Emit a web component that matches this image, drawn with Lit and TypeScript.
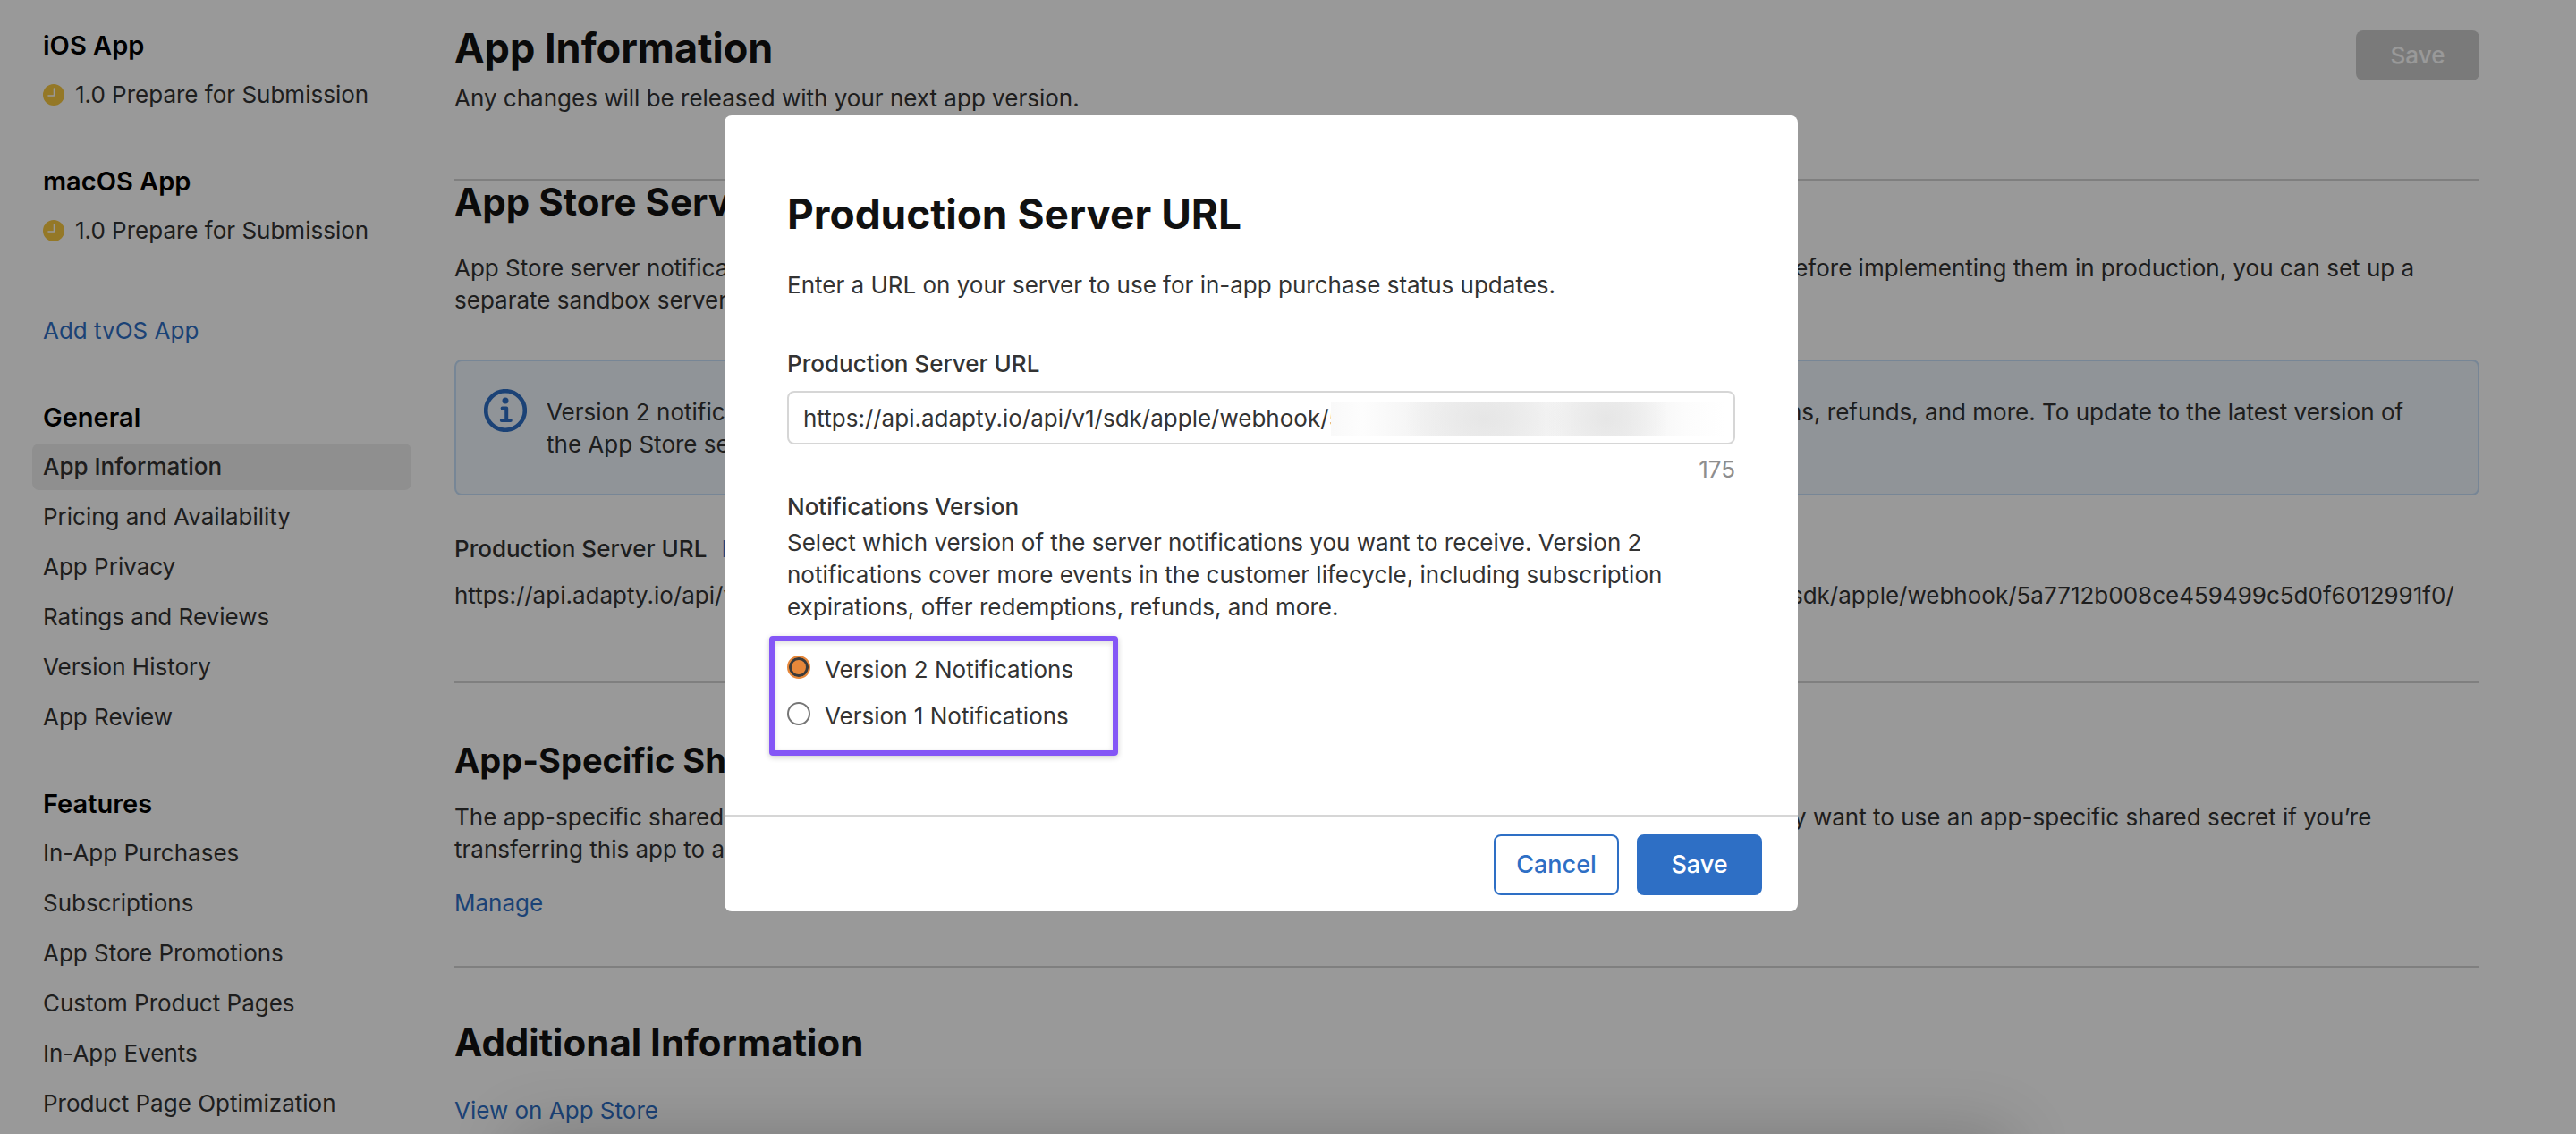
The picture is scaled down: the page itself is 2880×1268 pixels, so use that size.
import { LitElement, html, css, svg, nothing } from "lit";
import { customElement, property, state } from "lit/decorators.js";

const clockIcon = svg`<svg class="clock" viewBox="0 0 24 24" aria-hidden="true">
  <circle cx="12" cy="12" r="12" fill="#f7c841" />
  <path d="M12.5 5v8H6" fill="none" stroke="#fff" stroke-width="1.6" stroke-linecap="round" stroke-linejoin="round" />
</svg>`;

const infoIcon = svg`<svg class="info-icon" viewBox="0 0 48 48" aria-hidden="true">
  <circle cx="24" cy="24" r="21.8" fill="none" stroke="#2e6fc5" stroke-width="4.6" />
  <circle cx="24" cy="13" r="3.5" fill="#2e6fc5" />
  <path d="M20.6 21.6h4.6v13M19.8 35h10" fill="none" stroke="#2e6fc5" stroke-width="4" stroke-linecap="round" stroke-linejoin="round" />
</svg>`;

const SERVER_URL = "https://api.adapty.io/api/v1/sdk/apple/webhook/5a7712b008ce459499c5d0f6012991f0/";

const GENERAL = [
  "App Information",
  "Pricing and Availability",
  "App Privacy",
  "Ratings and Reviews",
  "Version History",
  "App Review",
];

const FEATURES = [
  "In-App Purchases",
  "Subscriptions",
  "App Store Promotions",
  "Custom Product Pages",
  "In-App Events",
  "Product Page Optimization",
];

@customElement("side-nav")
export class SideNav extends LitElement {
  static styles = css`
    :host {
      display: block;
      width: 424px;
      padding: 30px 0 0 36px;
    }
    .heading {
      margin: 0;
      padding-left: 12px;
      font-size: 29px;
      line-height: 42px;
      font-weight: 600;
      color: #000;
    }
    .release {
      display: flex;
      align-items: center;
      gap: 12px;
      margin-top: 16px;
      padding-left: 12px;
      line-height: 36px;
      text-decoration: none;
      color: #333;
    }
    .clock {
      width: 24px;
      height: 24px;
    }
    .platform {
      margin-bottom: 58px;
    }
    .add {
      display: block;
      margin-top: 76px;
      padding: 0 0 8px 12px;
      line-height: 36px;
      color: #2e6fc5;
      text-decoration: none;
    }
    .group {
      margin-top: 50px;
    }
    .list {
      display: flex;
      flex-direction: column;
      gap: 4px;
      margin: 8px 0 0;
      padding: 0;
      list-style: none;
    }
    .item {
      display: block;
      padding: 8px 12px;
      border-radius: 8px;
      line-height: 36px;
      color: #333;
      text-decoration: none;
    }
    .item[aria-current] {
      background: #eee;
      font-weight: 500;
    }
  `;

  @property() current = "App Information";

  private platform(name: string) {
    return html`<section class="platform">
      <h2 class="heading">${name}</h2>
      <a class="release" href="#">${clockIcon}<span>1.0 Prepare for Submission</span></a>
    </section>`;
  }

  private group(name: string, items: string[]) {
    return html`<section class="group">
      <h2 class="heading">${name}</h2>
      <ul class="list">
        ${items.map(
          (item) => html`<li>
            <a class="item" href="#" aria-current=${item === this.current ? "page" : nothing}>${item}</a>
          </li>`
        )}
      </ul>
    </section>`;
  }

  render() {
    return html`<nav>
      ${this.platform("iOS App")} ${this.platform("macOS App")}
      <a class="add" href="#">Add tvOS App</a>
      ${this.group("General", GENERAL)} ${this.group("Features", FEATURES)}
    </nav>`;
  }
}

@customElement("url-dialog")
export class UrlDialog extends LitElement {
  static styles = css`
    :host {
      display: block;
      width: 1200px;
      border-radius: 8px;
      background: #fff;
      color: #333;
    }
    .content {
      padding: 80px 70px 66px;
    }
    .title {
      margin: 0;
      font-size: 46px;
      line-height: 60px;
      font-weight: 700;
      color: #111;
    }
    .lead {
      margin: 32px 0 0;
      line-height: 36px;
    }
    .label {
      display: block;
      margin: 52px 0 0;
      line-height: 36px;
      font-weight: 500;
    }
    .field {
      position: relative;
      margin-top: 12px;
    }
    .input {
      display: block;
      box-sizing: border-box;
      width: 100%;
      height: 60px;
      padding: 0 16px;
      border: 2px solid #d6d6d6;
      border-radius: 8px;
      background: #fff;
      font: inherit;
      color: #333;
      outline: none;
    }
    .mask {
      position: absolute;
      top: 12px;
      right: 12px;
      width: 440px;
      height: 38px;
      background: radial-gradient(ellipse 90px 60px at 39% 50%, #e6e6e6, transparent),
        radial-gradient(ellipse 70px 60px at 70% 50%, #e6e6e6, transparent),
        linear-gradient(90deg, #f9f9f9 0%, #fdfdfd 8%, #f3f3f3 24%, #f0f0f0 45%, #f5f5f5 55%, #f1f1f1 74%, #fcfcfc 90%, #fff 100%);
    }
    .count {
      margin: 10px 0 0;
      line-height: 36px;
      text-align: right;
      color: #8e8e8e;
    }
    .versions {
      margin: 6px 0 0;
      padding: 0;
      border: 0;
      min-width: 0;
    }
    .legend {
      padding: 0;
      line-height: 36px;
      font-weight: 500;
    }
    .text {
      margin: 4px 0 0;
      line-height: 36px;
    }
    .choices {
      box-sizing: border-box;
      display: flex;
      flex-direction: column;
      gap: 16px;
      width: 390px;
      margin: 14px 0 0 -20px;
      padding: 14px 14px 20px;
      border: 6px solid #8456f6;
      border-radius: 4px;
      box-shadow: 0 2px 6px #0003, inset 0 2px 6px #0002;
    }
    .choice {
      display: flex;
      gap: 16px;
      line-height: 36px;
    }
    .radio {
      appearance: none;
      box-sizing: border-box;
      width: 26px;
      height: 26px;
      margin: 2px 0 0;
      border: 2px solid #767676;
      border-radius: 50%;
      background: #fff;
    }
    .radio:checked {
      border-color: #e6873a;
      background: #e6873a;
      box-shadow: inset 0 0 0 3px #3a3a3a;
    }
    .actions {
      display: flex;
      justify-content: flex-end;
      gap: 20px;
      padding: 20px 40px 18px;
      border-top: 2px solid #d6d6d6;
    }
    .button {
      width: 140px;
      height: 68px;
      padding: 0;
      border: 2px solid #2e6fc5;
      border-radius: 8px;
      background: #fff;
      font: inherit;
      font-size: 27px;
      font-weight: 500;
      color: #2e6fc5;
    }
    .button.primary {
      background: #2e6fc5;
      color: #fff;
    }
  `;

  @state() private version = 2;

  private choice(n: number) {
    return html`<label class="choice">
      <input class="radio" type="radio" name="version" .checked=${this.version === n} @change=${() => (this.version = n)} />
      <span>Version ${n} Notifications</span>
    </label>`;
  }

  render() {
    return html`<form role="dialog" aria-labelledby="title" @submit=${(e: Event) => e.preventDefault()}>
      <div class="content">
        <h2 class="title" id="title">Production Server URL</h2>
        <p class="lead">Enter a URL on your server to use for in-app purchase status updates.</p>
        <label class="label" for="url">Production Server URL</label>
        <div class="field">
          <input class="input" id="url" type="text" .value=${SERVER_URL.slice(0, 48)} />
          <div class="mask"></div>
        </div>
        <p class="count">175</p>
        <fieldset class="versions">
          <legend class="legend">Notifications Version</legend>
          <p class="text">
            Select which version of the server notifications you want to receive. Version 2<br />
            notifications cover more events in the customer lifecycle, including subscription<br />
            expirations, offer redemptions, refunds, and more.
          </p>
          <div class="choices">${this.choice(2)}${this.choice(1)}</div>
        </fieldset>
      </div>
      <div class="actions">
        <button class="button" type="button">Cancel</button>
        <button class="button primary" type="submit">Save</button>
      </div>
    </form>`;
  }
}

@customElement("app-root")
export class AppRoot extends LitElement {
  static styles = css`
    :host {
      display: block;
      position: relative;
      height: 100vh;
      overflow: hidden;
      background: #fff;
      font-family: Inter, "Liberation Sans", sans-serif;
      font-size: 26px;
      line-height: 36px;
      color: #333;
    }
    .page {
      display: flex;
      gap: 48px;
      padding-right: 108px;
    }
    side-nav {
      flex: none;
    }
    .main {
      flex: 1;
      min-width: 0;
      padding-top: 24px;
    }
    .top {
      display: flex;
      justify-content: space-between;
      align-items: flex-start;
      padding-bottom: 72px;
      border-bottom: 2px solid #d4d4d4;
    }
    .title {
      margin: 0;
      font-size: 45px;
      line-height: 60px;
      font-weight: 700;
      color: #111;
    }
    .copy {
      margin: 8px 0 0;
    }
    .save {
      width: 138px;
      height: 56px;
      margin-top: 10px;
      padding: 0;
      border: 0;
      border-radius: 8px;
      background: #ccc;
      font: inherit;
      font-weight: 500;
      color: #fff;
    }
    .section {
      border-bottom: 2px solid #d4d4d4;
    }
    .section.last {
      border: 0;
    }
    .heading {
      margin: 0;
      font-size: 42px;
      line-height: 48px;
      font-weight: 700;
      color: #111;
    }
    .link {
      color: #2e6fc5;
      text-decoration: none;
      font-weight: 400;
    }
    .server .heading {
      margin-bottom: 32px;
    }
    .server .copy,
    .shared .copy,
    .note {
      margin: 0;
    }
    .info {
      display: flex;
      gap: 22px;
      margin: 48px 0 42px;
      padding: 31px 31px 37px;
      border: 2px solid #c7e0fa;
      border-radius: 8px;
      background: #f0f7fd;
    }
    .info-icon {
      flex: none;
      width: 48px;
      height: 48px;
    }
    .note {
      padding-top: 8px;
    }
    .urls {
      display: grid;
      grid-template-columns: 1fr 1fr;
      gap: 54px;
      margin-bottom: 78px;
    }
    .name {
      display: flex;
      gap: 16px;
      margin: 0 0 16px;
      font-size: inherit;
      font-weight: 500;
    }
    .url {
      margin: 0;
      white-space: nowrap;
    }
    .shared {
      padding: 62px 0 52px;
    }
    .shared .heading {
      margin-bottom: 22px;
      font-size: 38px;
    }
    .shared .copy {
      margin-bottom: 24px;
    }
    .last {
      padding-top: 60px;
    }
    .last .heading {
      margin-bottom: 34px;
    }
    .overlay {
      position: absolute;
      inset: 0;
      display: flex;
      justify-content: center;
      align-items: flex-start;
      padding: 129px 60px 0 0;
      background: #0006;
    }
    /* Soft shade rising from below the window's lower edge */
    .overlay::after {
      content: "";
      position: absolute;
      top: 100%;
      left: 20%;
      right: 22%;
      height: 160px;
      box-shadow: 0 0 76px #0003;
    }
  `;

  render() {
    return html`
      <div class="page">
        <side-nav></side-nav>
        <main class="main">
          <header class="top">
            <div>
              <h1 class="title">App Information</h1>
              <p class="copy">Any changes will be released with your next app version.</p>
            </div>
            <button class="save" type="button" disabled>Save</button>
          </header>
          <section class="section server">
            <h2 class="heading">App Store Server Notifications</h2>
            <p class="copy">
              App Store server notifications provide real-time updates on the state of in-app purchases so you can respond to events. Before implementing them in production, you can set up a<br />
              separate sandbox server URL to test them.
            </p>
            <div class="info">
              ${infoIcon}
              <p class="note">
                Version 2 notifications cover more events in the customer lifecycle, plus subscription expirations, offer redemptions, refunds, and more. To update to the latest version of<br />
                the App Store server notifications, edit the URL.
              </p>
            </div>
            <div class="urls">
              <div>
                <h3 class="name">Production Server URL <a class="link" href="#">Edit</a></h3>
                <p class="url">${SERVER_URL}</p>
              </div>
              <div>
                <h3 class="name">Sandbox Server URL <a class="link" href="#">Edit</a></h3>
                <p class="url">${SERVER_URL}</p>
              </div>
            </div>
          </section>
          <section class="section shared">
            <h2 class="heading">App-Specific Shared Secret</h2>
            <p class="copy">
              The app-specific shared secret is a unique code to read receipts for only this app’s auto-renewable subscriptions. You may want to use an app-specific shared secret if you’re<br />
              transferring this app to another developer.
            </p>
            <a class="link" href="#">Manage</a>
          </section>
          <section class="section last">
            <h2 class="heading">Additional Information</h2>
            <a class="link" href="#">View on App Store</a>
          </section>
        </main>
      </div>
      <div class="overlay"><url-dialog></url-dialog></div>
    `;
  }
}
